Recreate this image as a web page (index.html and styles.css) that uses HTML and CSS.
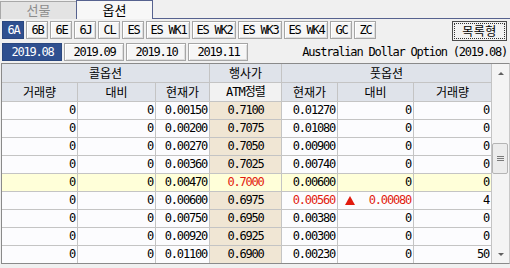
FILE: index.html
```html
<!DOCTYPE html>
<html lang="ko">
<head>
<meta charset="utf-8">
<link rel="stylesheet" href="styles.css">
</head>
<body>
<div class="tabs">
  <div class="tab off">선물</div>
  <div class="tab on">옵션</div>
  <div class="tab-fill"></div>
</div>
<div class="toolbar">
  <div class="btn sel">6A</div>
  <div class="btn">6B</div>
  <div class="btn">6E</div>
  <div class="btn">6J</div>
  <div class="btn">CL</div>
  <div class="btn">ES</div>
  <div class="btn wide">ES WK1</div>
  <div class="btn wide">ES WK2</div>
  <div class="btn wide">ES WK3</div>
  <div class="btn wide">ES WK4</div>
  <div class="btn">GC</div>
  <div class="btn">ZC</div>
  <div class="list-btn"><span>목록형</span></div>
</div>
<div class="dates">
  <div class="btn date sel">2019.08</div>
  <div class="btn date">2019.09</div>
  <div class="btn date">2019.10</div>
  <div class="btn date">2019.11</div>
  <div class="title">Australian Dollar Option (2019.08)</div>
</div>
<div class="board">
  <div class="grid">
    <div class="h span3">콜옵션</div>
    <div class="h">행사가</div>
    <div class="h span3">풋옵션</div>

    <div class="h">거래량</div>
    <div class="h">대비</div>
    <div class="h">현재가</div>
    <div class="h atmh">ATM정렬</div>
    <div class="h">현재가</div>
    <div class="h">대비</div>
    <div class="h">거래량</div>

    <div class="c">0</div><div class="c">0</div><div class="c">0.00150</div><div class="c atm">0.7100</div><div class="c">0.01270</div><div class="c">0</div><div class="c">0</div>
    <div class="c">0</div><div class="c">0</div><div class="c">0.00200</div><div class="c atm">0.7075</div><div class="c">0.01080</div><div class="c">0</div><div class="c">0</div>
    <div class="c">0</div><div class="c">0</div><div class="c">0.00270</div><div class="c atm">0.7050</div><div class="c">0.00900</div><div class="c">0</div><div class="c">0</div>
    <div class="c">0</div><div class="c">0</div><div class="c">0.00360</div><div class="c atm">0.7025</div><div class="c">0.00740</div><div class="c">0</div><div class="c">0</div>
    <div class="c hl">0</div><div class="c hl">0</div><div class="c hl">0.00470</div><div class="c atm hl red">0.7000</div><div class="c hl">0.00600</div><div class="c hl">0</div><div class="c hl">0</div>
    <div class="c">0</div><div class="c">0</div><div class="c">0.00600</div><div class="c atm">0.6975</div><div class="c red">0.00560</div><div class="c red updown"><span class="tri"></span><span>0.00080</span></div><div class="c">4</div>
    <div class="c">0</div><div class="c">0</div><div class="c">0.00750</div><div class="c atm">0.6950</div><div class="c">0.00380</div><div class="c">0</div><div class="c">0</div>
    <div class="c">0</div><div class="c">0</div><div class="c">0.00920</div><div class="c atm">0.6925</div><div class="c">0.00300</div><div class="c">0</div><div class="c">0</div>
    <div class="c">0</div><div class="c">0</div><div class="c">0.01100</div><div class="c atm">0.6900</div><div class="c">0.00230</div><div class="c">0</div><div class="c">50</div>
  </div>
  <div class="scroll">
    <div class="arrow-box"><span class="arrow up"></span></div>
    <div class="track">
      <div class="thumb"><i></i><i></i><i></i></div>
    </div>
    <div class="arrow-box"><span class="arrow down"></span></div>
  </div>
</div>
</body>
</html>
```

FILE: styles.css
```css
html, body {
  margin: 0;
  padding: 0;
}
body {
  width: 510px;
  height: 268px;
  overflow: hidden;
  background: #f0f0f0;
  color: #000;
  font-family: "DejaVu Sans Mono", "Noto Sans CJK KR", monospace;
  font-size: 12px;
  letter-spacing: -1.2px;
}

/* tabs */
.tabs {
  display: flex;
  height: 19px;
}
.tab {
  box-sizing: border-box;
  text-align: center;
  font-family: "Noto Sans CJK KR", sans-serif;
  font-size: 13px;
  letter-spacing: 0;
}
.tab.off {
  width: 76px;
  margin-top: 1px;
  height: 18px;
  line-height: 16px;
  border: 1px solid #a8a8a8;
  border-right: none;
  border-bottom: none;
  background: #e3e3e3;
  color: #8c8c8c;
}
.tab.on {
  width: 77px;
  height: 19px;
  line-height: 18px;
  border: 1px solid #56628f;
  border-bottom: none;
  background: #f7f7f7;
}
.tab-fill {
  flex: 1;
  border-bottom: 1px solid #56628f;
}

/* toolbar */
.toolbar {
  display: flex;
  align-items: flex-start;
  gap: 2px;
  margin-top: 2px;
  padding-left: 2px;
  padding-right: 3px;
  height: 20px;
}
.btn {
  box-sizing: border-box;
  width: 22px;
  height: 18px;
  line-height: 16px;
  text-align: center;
  background: #f6f6f6;
  border: 1px solid #a6a6a6;
  box-shadow: inset 1px 1px 0 #ffffff, inset -1px -1px 0 #dedede;
  padding-left: 1px;
}
.btn.wide {
  width: 44px;
}
.btn.sel {
  background: #2f5090;
  border-color: #2a477f;
  box-shadow: none;
  color: #fff;
}
.list-btn {
  margin-left: auto;
  box-sizing: border-box;
  width: 55px;
  height: 20px;
  border: 1px solid #4a4a4a;
  background: #f2f2f2;
  padding: 2px;
  font-family: "Noto Sans CJK KR", sans-serif;
  font-size: 12px;
  letter-spacing: 0.5px;
}
.list-btn span {
  display: block;
  height: 14px;
  line-height: 13px;
  text-align: center;
  outline: 1px dotted #333;
}

/* dates */
.dates {
  display: flex;
  align-items: center;
  gap: 2px;
  margin-top: 2px;
  padding-left: 2px;
  padding-right: 3px;
  height: 18px;
}
.btn.date {
  width: 60px;
}
.title {
  margin-left: auto;
}

/* board */
.board {
  display: flex;
  margin-top: 2px;
  margin-left: 1px;
  width: 509px;
  box-sizing: border-box;
  border: 1px solid #8a8a8a;
  border-right-color: #c8c8c8;
  background: #c4c4c4;
}
.grid {
  display: grid;
  grid-template-columns: 75px 77px 53px 71px 55px 75px 77px;
  grid-template-rows: 18px 18px repeat(9, 17px);
  gap: 1px;
  background: #c4c4c4;
  border-right: 1px solid #c4c4c4;
}
.h {
  background: #dfe3ea;
  text-align: center;
  line-height: 18px;
  font-family: "Noto Sans CJK KR", sans-serif;
  font-size: 12px;
  letter-spacing: 0;
}
.h.atmh {
  background: #f2f2f2;
  font-family: "DejaVu Sans Mono", "Noto Sans CJK KR", monospace;
  letter-spacing: -1px;
}
.span3 {
  grid-column: span 3;
}
.c {
  background: #fcfcfe;
  text-align: right;
  padding-right: 2px;
  line-height: 17px;
}
.c.atm {
  background: #f0e6d4;
  text-align: center;
  padding-right: 0;
}
.c.hl {
  background: #ffffd9;
}
.red {
  color: #e21b0e;
}
.updown {
  display: flex;
  justify-content: space-between;
  align-items: center;
  padding-left: 7px;
}
.tri {
  width: 0;
  height: 0;
  border-left: 5px solid transparent;
  border-right: 5px solid transparent;
  border-bottom: 9px solid #e21b0e;
}

/* scrollbar */
.scroll {
  width: 17px;
  display: flex;
  flex-direction: column;
  background: #f4f4f4;
}
.arrow-box {
  height: 17px;
  display: flex;
  align-items: center;
  justify-content: center;
}
.arrow {
  width: 0;
  height: 0;
  border-left: 3px solid transparent;
  border-right: 3px solid transparent;
}
.arrow.up {
  border-bottom: 3px solid #606060;
  margin-top: 1px;
}
.arrow.down {
  border-top: 3px solid #606060;
}
.track {
  flex: 1;
}
.thumb {
  box-sizing: border-box;
  margin: 62px 1px 0 0;
  height: 31px;
  border: 1px solid #b4b4b4;
  border-radius: 2px;
  background: #ececec;
  display: flex;
  flex-direction: column;
  align-items: center;
  justify-content: center;
  gap: 1px;
}
.thumb i {
  display: block;
  width: 7px;
  height: 1px;
  background: #7a7a7a;
}
```
